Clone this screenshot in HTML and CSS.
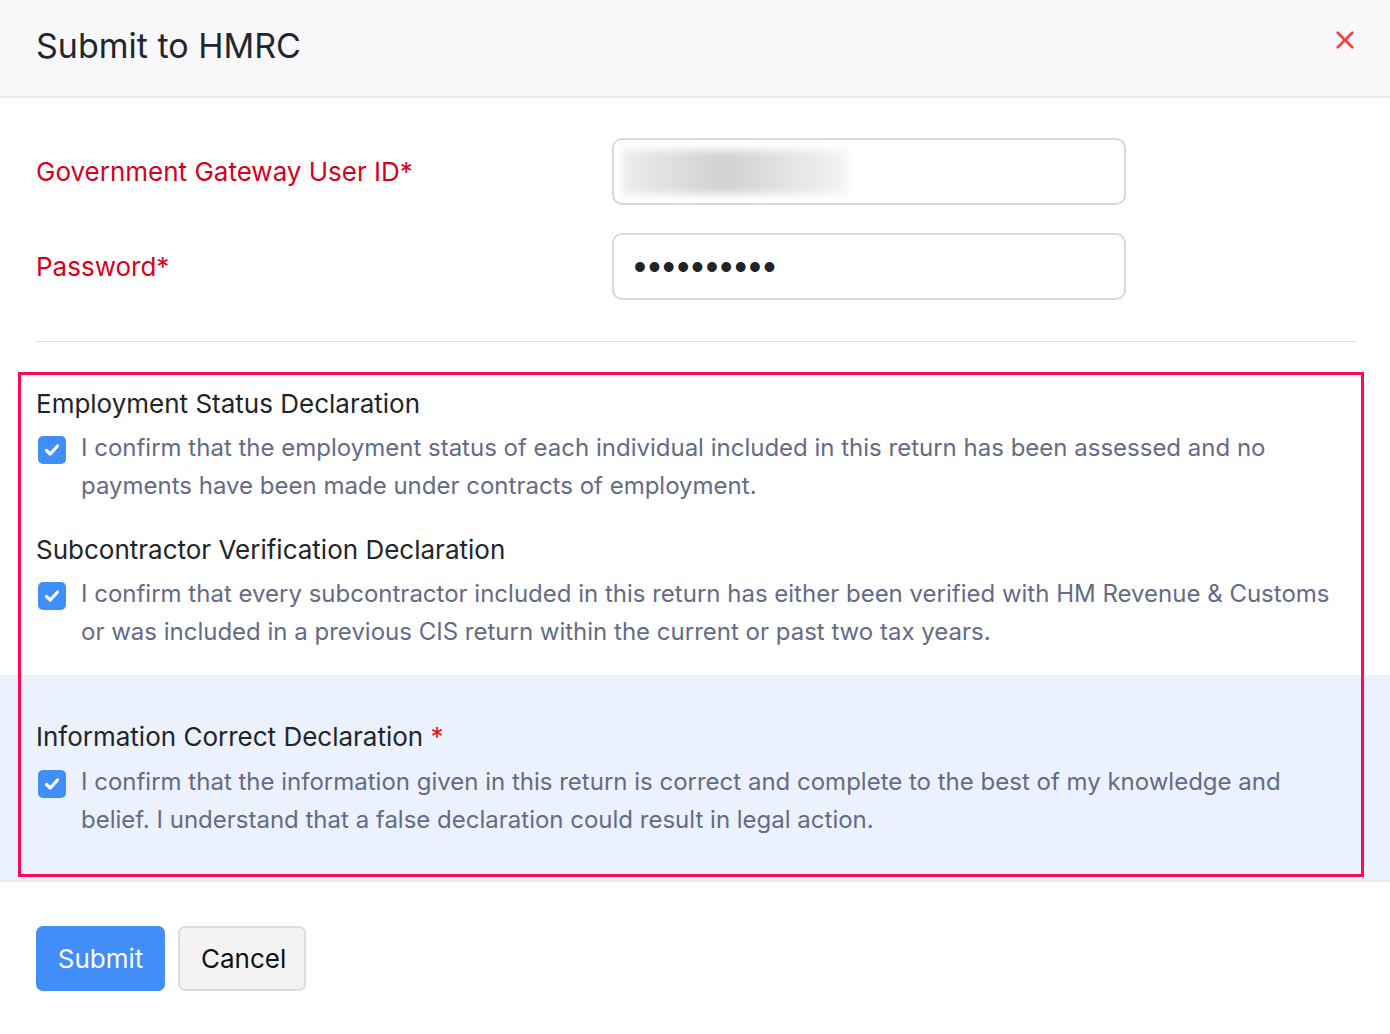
FILE: index.html
```html
<!DOCTYPE html>
<html lang="en">
  <head>
    <meta charset="UTF-8" />
    <meta name="viewport" content="width=device-width, initial-scale=1.0" />
    <title>Submit to HMRC</title>
    <link rel="stylesheet" href="styles.css">
  </head>
  <body>
    <div class="modal">
      <div class="modal-header">
        <h1>Submit to HMRC</h1>
        <button class="close" type="button" aria-label="Close">
          <svg width="22" height="22" viewBox="0 0 22 22">
            <path d="M3 3 L19 19 M19 3 L3 19" stroke="#f5403f" stroke-width="3" stroke-linecap="round" />
          </svg>
        </button>
      </div>

      <div class="creds">
        <label class="req" for="userid">Government Gateway User ID*</label>
        <div class="input">
          <span class="blurred"></span>
        </div>
        <label class="req" for="pwd">Password*</label>
        <div class="input">
          <span class="dots">&#9679;&#9679;&#9679;&#9679;&#9679;&#9679;&#9679;&#9679;&#9679;&#9679;</span>
        </div>
      </div>

      <div class="divider"></div>

      <div class="declarations">
        <div class="decl first">
          <h2>Employment Status Declaration</h2>
          <div class="check-row">
            <span class="box"><svg width="20" height="20" viewBox="0 0 20 20"><path d="M4.5 10.5 L8.3 14 L15.5 6" fill="none" stroke="#fff" stroke-width="3.2" stroke-linecap="round" stroke-linejoin="round"/></svg></span>
            <p>I confirm that the employment status of each individual included in this return has been assessed and no payments have been made under contracts of employment.</p>
          </div>
        </div>

        <div class="decl second">
          <h2>Subcontractor Verification Declaration</h2>
          <div class="check-row">
            <span class="box"><svg width="20" height="20" viewBox="0 0 20 20"><path d="M4.5 10.5 L8.3 14 L15.5 6" fill="none" stroke="#fff" stroke-width="3.2" stroke-linecap="round" stroke-linejoin="round"/></svg></span>
            <p>I confirm that every subcontractor included in this return has either been verified with HM Revenue &amp; Customs or was included in a previous CIS return within the current or past two tax years.</p>
          </div>
        </div>

        <div class="decl shaded">
          <h2>Information Correct Declaration <span class="star">*</span></h2>
          <div class="check-row">
            <span class="box"><svg width="20" height="20" viewBox="0 0 20 20"><path d="M4.5 10.5 L8.3 14 L15.5 6" fill="none" stroke="#fff" stroke-width="3.2" stroke-linecap="round" stroke-linejoin="round"/></svg></span>
            <p>I confirm that the information given in this return is correct and complete to the best of my knowledge and belief. I understand that a false declaration could result in legal action.</p>
          </div>
        </div>

        <div class="highlight"></div>
      </div>

      <div class="modal-footer">
        <button class="btn btn-primary" type="button">Submit</button>
        <button class="btn btn-default" type="button">Cancel</button>
      </div>
    </div>
  </body>
</html>
```

FILE: styles.css
```css
* {
  margin: 0px;
  box-sizing: border-box;
}

body {
  font-family: Inter, "Noto Sans", sans-serif;
  background-color: #fff;
  color: #212529;
}

.modal-header {
  display: flex;
  align-items: center;
  justify-content: space-between;
  height: 98px;
  padding: 0px 36px 6px 36px;
  background-color: #f8f8fa;
  border-bottom: 2px solid #e9e9ec;
}

.modal-header h1 {
  font-size: 34px;
  font-weight: 400;
  color: #21262d;
}

.close {
  border: none;
  background: none;
  padding: 0px;
  display: flex;
  margin-right: -1px;
  margin-bottom: 10px;
}

.close svg {
  width: 20px;
  height: 20px;
}

.creds {
  display: grid;
  grid-template-columns: 576px 514px;
  row-gap: 28px;
  align-items: center;
  padding: 40px 36px 0px 36px;
}

.req {
  font-size: 26px;
  color: #d8001f;
}

.input {
  height: 67px;
  border: 2px solid #d8d6e4;
  border-radius: 10px;
  display: flex;
  align-items: center;
  padding: 0px 9px;
}

.blurred {
  display: block;
  width: 224px;
  height: 44px;
  background: linear-gradient(90deg, #ececec, #d0d1d3 45%, #e4e4e5 75%, #f4f4f4);
  filter: blur(4px);
}

.dots {
  font-size: 13px;
  letter-spacing: 2.5px;
  color: #212529;
  padding-left: 11px;
}

.divider {
  height: 1px;
  background-color: #e3e3e6;
  margin: 41px 34px 0px 36px;
}

.declarations {
  position: relative;
  border-bottom: 2px solid #e9e9ec;
}

.decl {
  padding: 0px 36px;
}

.decl.first {
  padding-top: 46px;
}

.decl.second {
  padding-top: 29px;
  padding-bottom: 24px;
}

.decl.shaded {
  background-color: #ebf2fd;
  padding-top: 46px;
  padding-bottom: 41px;
}

.decl h2 {
  font-size: 26px;
  font-weight: 400;
  line-height: 32px;
  color: #212529;
  margin-bottom: 9px;
}

.decl.shaded h2 {
  margin-bottom: 10px;
}

.star {
  color: #e0141e;
}

.check-row {
  display: flex;
  gap: 15px;
  align-items: flex-start;
}

.box {
  flex: none;
  width: 28px;
  height: 28px;
  margin-top: 7px;
  margin-left: 2px;
  border-radius: 5px;
  background-color: #408ff8;
  display: flex;
  align-items: center;
  justify-content: center;
}

.check-row p {
  font-size: 24px;
  line-height: 38px;
  color: #646b86;
}

.highlight {
  position: absolute;
  left: 18px;
  top: 30px;
  width: 1346px;
  height: 505px;
  border: 3px solid #ff0a55;
  pointer-events: none;
}

.modal-footer {
  display: flex;
  gap: 13px;
  padding: 44px 36px 42px 36px;
}

.btn {
  height: 65px;
  border-radius: 7px;
  font-family: Inter, "Noto Sans", sans-serif;
  font-size: 26px;
  padding: 0px 21px;
}

.btn-primary {
  width: 129px;
  background-color: #418ef8;
  border: none;
  color: #fff;
}

.btn-default {
  width: 128px;
  background-color: #f3f3f3;
  border: 2px solid #dddddd;
  color: #111;
}
```
